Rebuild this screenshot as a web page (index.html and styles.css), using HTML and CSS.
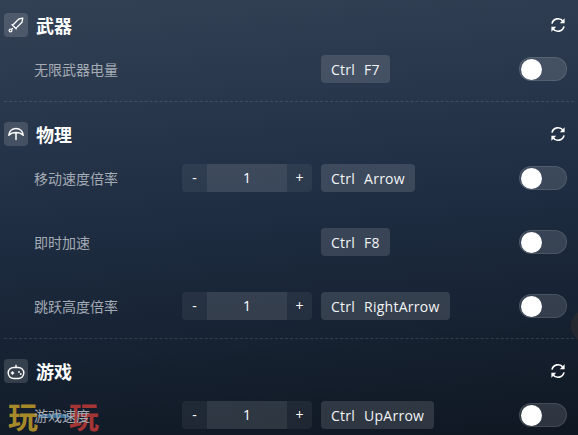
FILE: index.html
```html
<!DOCTYPE html>
<html lang="zh">
<head>
<meta charset="utf-8">
<title>修改器</title>
<link rel="stylesheet" href="styles.css">
</head>
<body>
<svg class="sprites" width="0" height="0" aria-hidden="true">
  <symbol id="refresh" viewBox="0 0 16 16">
    <path d="M2 6.600A6.200 6.200 0 0 1 13 4.200" fill="none" stroke="currentColor" stroke-width="1.600"/>
    <path d="M14.600 1.200V6.200H9.800z" fill="currentColor"/>
    <path d="M14 9.400A6.200 6.200 0 0 1 3 11.800" fill="none" stroke="currentColor" stroke-width="1.600"/>
    <path d="M1.400 14.800V9.800H6.200z" fill="currentColor"/>
  </symbol>
</svg>
<main class="page">
  <section class="group">
    <header class="group-head">
      <span class="group-icon">
        <svg viewBox="0 0 24 24" width="24" height="24"><path d="M18.800 5.200l-.8 4-6.200 6.200-3.200-3.200L14.800 6zM7.600 11.400l5 5M8.900 15.100l-1.300 1.300" fill="none" stroke="#fff" stroke-width="1.300" stroke-linejoin="round"/><circle cx="6.500" cy="17.500" r="1.400" fill="none" stroke="#fff" stroke-width="1.200"/></svg>
      </span>
      <h2 class="group-title">武器</h2>
      <svg class="reset"><use href="#refresh"/></svg>
    </header>
    <div class="row">
      <span class="label">无限武器电量</span>
      <span></span>
      <span class="keys"><span>Ctrl</span><span>F7</span></span>
      <span class="toggle"><i class="knob"></i></span>
    </div>
  </section>

  <section class="group">
    <header class="group-head">
      <span class="group-icon">
        <svg viewBox="0 0 24 24" width="24" height="24"><path d="M4.800 13.200C5.200 9 8.200 6.500 12 6.500s6.800 2.500 7.200 6.700C17.200 11.200 14.600 10.500 12 10.500S6.800 11.200 4.800 13.200zM12 10.500v7" fill="none" stroke="#fff" stroke-width="1.500" stroke-linejoin="round" stroke-linecap="round"/></svg>
      </span>
      <h2 class="group-title">物理</h2>
      <svg class="reset"><use href="#refresh"/></svg>
    </header>
    <div class="row">
      <span class="label">移动速度倍率</span>
      <span class="stepper"><b>-</b><em>1</em><b>+</b></span>
      <span class="keys"><span>Ctrl</span><span>Arrow</span></span>
      <span class="toggle"><i class="knob"></i></span>
    </div>
    <div class="row">
      <span class="label">即时加速</span>
      <span></span>
      <span class="keys"><span>Ctrl</span><span>F8</span></span>
      <span class="toggle"><i class="knob"></i></span>
    </div>
    <div class="row">
      <span class="label">跳跃高度倍率</span>
      <span class="stepper"><b>-</b><em>1</em><b>+</b></span>
      <span class="keys"><span>Ctrl</span><span>RightArrow</span></span>
      <span class="toggle"><i class="knob"></i></span>
    </div>
  </section>

  <section class="group">
    <header class="group-head">
      <span class="group-icon">
        <svg viewBox="0 0 24 24" width="24" height="24"><rect x="4.200" y="8.500" width="15.600" height="11" rx="5.500" fill="none" stroke="#fff" stroke-width="1.400"/><path d="M12 8.500V5.800M6.800 14h3.400M8.500 12.300v3.400" fill="none" stroke="#fff" stroke-width="1.300"/><circle cx="15" cy="13" r=".9" fill="#fff"/><circle cx="16.800" cy="15" r=".9" fill="#fff"/></svg>
      </span>
      <h2 class="group-title">游戏</h2>
      <svg class="reset"><use href="#refresh"/></svg>
    </header>
    <div class="row">
      <span class="label">游戏速度</span>
      <span class="stepper"><b>-</b><em>1</em><b>+</b></span>
      <span class="keys"><span>Ctrl</span><span>UpArrow</span></span>
      <span class="toggle"><i class="knob"></i></span>
    </div>
  </section>

  <div class="badge-dot"></div>
  <div class="logo"><span class="logo-gold">玩</span><i class="logo-mid"></i><span class="logo-red">玩</span></div>
</main>
</body>
</html>
```

FILE: styles.css
```css
* { box-sizing: border-box; }
html, body { margin: 0; height: 100%; overflow: hidden; }
body {
  font-family: "Open Sans", "Noto Sans CJK SC", sans-serif;
  color: #fff;
  background: #111a26;
}
.sprites { position: absolute; }
.page {
  position: relative;
  isolation: isolate;
  height: 435px;
  overflow: hidden;
  padding-top: 13px;
  background: linear-gradient(175deg, #334155 0%, #1e2d42 48%, #0f1722 100%);
}
.group { border-bottom: 1px dashed rgba(148, 163, 184, .22); margin: 0 4px; }
.group + .group { padding-top: 20px; }
.group:last-of-type { border-bottom: 0; }
.group-head { display: flex; align-items: center; height: 24px; padding-right: 2px; }
.group-icon {
  width: 24px; height: 24px; border-radius: 4px;
  background: rgba(255, 255, 255, .14);
  display: flex;
}
.group-title {
  margin: 0 0 0 8px;
  font: 700 18px/24px "Noto Sans CJK SC", sans-serif;
  color: #fff;
}
.reset { width: 16px; height: 16px; margin-left: auto; margin-right: 6px; color: #fff; }
.row {
  height: 64px;
  display: grid;
  grid-template-columns: 148px 130px auto 1fr;
  align-items: center;
  padding: 0 7px 0 30px;
}
.row > .keys { margin-left: 9px; }
.label { font: 400 14px/20px "Noto Sans CJK SC", sans-serif; color: #a4abb5; }
.stepper {
  display: flex;
  height: 28px;
  border-radius: 4px;
  overflow: hidden;
  background: rgba(255, 255, 255, .06);
  font-size: 14px;
  line-height: 28px;
  text-align: center;
}
.stepper b { width: 25px; font-weight: 400; color: #fff; }
.stepper em { flex: 1; font-style: normal; background: rgba(255, 255, 255, .07); }
.keys {
  display: inline-flex;
  justify-self: start;
  gap: 9px;
  height: 28px;
  padding: 0 10px;
  align-items: center;
  border-radius: 4px;
  background: rgba(255, 255, 255, .13);
  font-size: 14px;
  letter-spacing: .25px;
  color: #f2f4f6;
}
.toggle {
  justify-self: end;
  width: 48px; height: 24px;
  border-radius: 12px;
  background: rgba(255, 255, 255, .13);
  border: 1px solid rgba(255, 255, 255, .1);
  display: flex;
  align-items: center;
  padding-left: .5px;
}
.knob { width: 21px; height: 21px; border-radius: 50%; background: #fff; }
.badge-dot {
  position: absolute; left: 571px; top: 309px;
  width: 34px; height: 34px; border-radius: 50%;
  background: rgba(70, 55, 45, .35);
}
.logo {
  position: absolute; left: 8px; top: 397px;
  display: flex; align-items: center;
  z-index: -1;
  font: 700 30px/36px "Noto Sans CJK SC", sans-serif;
}
.logo-gold { color: #a68a2a; }
.logo-red { color: #a53535; }
.logo-mid { width: 31px; height: 4px; margin-top: 2px; background: #3f7fb0; border-radius: 2px; opacity: .8; }
```
